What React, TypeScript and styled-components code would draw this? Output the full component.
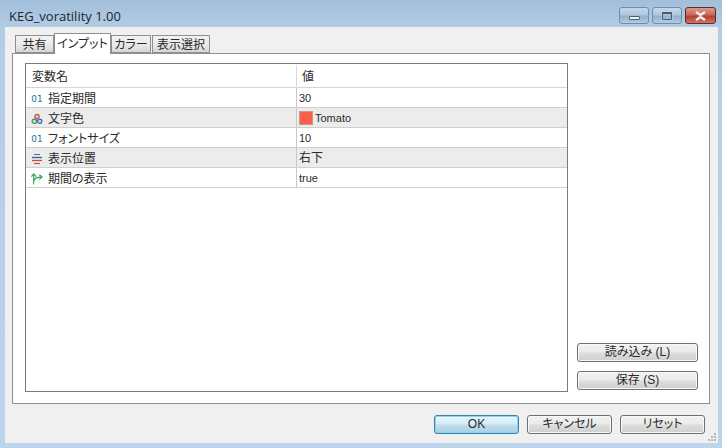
import * as React from "react"
import styled, { createGlobalStyle } from "styled-components"

const GlobalStyle = createGlobalStyle`
  html, body {
    margin: 0;
    padding: 0;
    background: #b9d1ea;
  }
  body {
    font-family: "Liberation Sans", "Noto Sans CJK JP", sans-serif;
    font-size: 12px;
    font-feature-settings: "palt";
    color: #2a2a2a;
  }
`

const Window = styled.div`
  width: 722px;
  height: 448px;
  box-sizing: border-box;
  display: flex;
  flex-direction: column;
  padding: 0 4px 5px 5px;
  background: linear-gradient(180deg, #a2bed9 0, #b4cde6 30px, #bcd4ec 100%);
  overflow: hidden;
`

const TitleBar = styled.div`
  height: 27px;
  flex: none;
  display: flex;
  justify-content: space-between;
  align-items: flex-start;
`

const Title = styled.div`
  font-family: "Open Sans", "Liberation Sans", sans-serif;
  font-size: 13px;
  line-height: 16px;
  padding: 8px 0 0 4px;
  color: #1c2630;
`

const Caption = styled.div`
  display: flex;
  gap: 3px;
  margin: 7px 2px 0 0;
`

const CaptionButton = styled.div<{ $close?: boolean; $w: number }>`
  width: ${({ $w }) => $w}px;
  height: 17px;
  box-sizing: border-box;
  display: flex;
  align-items: center;
  justify-content: center;
  border-radius: 3px;
  border: 1px solid ${({ $close }) => ($close ? "#5e2a2a" : "#6f8cab")};
  background: ${({ $close }) =>
    $close
      ? "linear-gradient(180deg, #dc9a8c 0, #c9695a 45%, #b5402f 55%, #cf7465 100%)"
      : "linear-gradient(180deg, #c5d8ea 0, #aec6de 45%, #93b0cd 55%, #b2cbe2 100%)"};
`

const MinimizeGlyph = styled.div`
  width: 11px;
  height: 4px;
  margin-top: 5px;
  box-sizing: border-box;
  background: #eef3f8;
  border: 1px solid #4d5f73;
  border-radius: 1px;
`

const MaximizeGlyph = styled.div`
  width: 10px;
  height: 8px;
  box-sizing: border-box;
  border: 1px solid #46586c;
  border-top-width: 2px;
  border-radius: 1px;
  box-shadow: 0 0 0 1px #d3e0ec55;
`

const Client = styled.div`
  position: relative;
  flex: 1;
  display: flex;
  flex-direction: column;
  box-sizing: border-box;
  padding: 6px 8px 0 7px;
  background: #f0f0f0;
`

const TabStrip = styled.div`
  display: flex;
  height: 20px;
  padding-left: 3px;
  align-items: flex-end;
  position: relative;
  z-index: 1;
`

const Tab = styled.div<{ $active?: boolean; $w: number; $gap: number }>`
  width: ${({ $w }) => $w}px;
  height: ${({ $active }) => ($active ? 21 : 18)}px;
  box-sizing: border-box;
  text-align: center;
  white-space: nowrap;
  line-height: ${({ $active }) => ($active ? 20 : 19)}px;
  margin-right: ${({ $gap }) => $gap}px;
  border: 1px solid #8e8f8f;
  border-bottom: ${({ $active }) => ($active ? "none" : "1px solid #8e8f8f")};
  background: ${({ $active }) =>
    $active ? "#ffffff" : "linear-gradient(180deg, #f2f2f2 0, #ebebeb 50%, #d6d6d6 100%)"};
  position: relative;
  z-index: ${({ $active }) => ($active ? 2 : 1)};
  margin-bottom: ${({ $active }) => ($active ? -1 : 0)}px;
`

const Panel = styled.div`
  height: 351px;
  box-sizing: border-box;
  border: 1px solid #8e8f8f;
  background: #ffffff;
  display: flex;
  padding: 9px 11px 11px 12px;
  gap: 9px;
`

const GridBox = styled.div`
  width: 543px;
  flex: none;
  box-sizing: border-box;
  border: 1px solid #7b7b7b;
  padding-top: 1px;
`

const HeaderRow = styled.div`
  display: grid;
  grid-template-columns: 270px 1fr;
  height: 23px;
  box-sizing: border-box;
  border-bottom: 1px solid #d5d5d5;
  line-height: 24px;
`

const HeaderCell = styled.div<{ $first?: boolean }>`
  padding-left: ${({ $first }) => ($first ? 6 : 5)}px;
  border-left: ${({ $first }) => ($first ? "none" : "1px solid #d9d9d9")};
`

const Row = styled.div<{ $shaded?: boolean }>`
  display: grid;
  grid-template-columns: 270px 1fr;
  height: 20px;
  box-sizing: border-box;
  border-bottom: 1px solid #cfcfcf;
  background: ${({ $shaded }) => ($shaded ? "#ececec" : "#ffffff")};
  line-height: 20px;
`

const NameCell = styled.div`
  display: flex;
  align-items: center;
  gap: 4px;
  padding: 2px 0 0 4px;
  box-sizing: border-box;
  height: 19px;
`

const IconSlot = styled.div`
  width: 14px;
  height: 14px;
  flex: none;
  display: flex;
  align-items: center;
  justify-content: center;
`

const NumberIcon = styled.span`
  font-family: "DejaVu Sans", sans-serif;
  font-size: 9px;
  color: #1f7390;
`

const ValueCell = styled.div`
  display: flex;
  align-items: center;
  gap: 2px;
  padding: 1px 0 0 2px;
  box-sizing: border-box;
  height: 19px;
  border-left: 1px solid #c8c8c8;
`

const ValueText = styled.span<{ $cjk?: boolean }>`
  font-size: ${({ $cjk }) => ($cjk ? 12 : 11)}px;
`

const Swatch = styled.div`
  width: 14px;
  height: 14px;
  box-sizing: border-box;
  background: #f9604a;
  border: 1px solid #c49a92;
`

const SideColumn = styled.div`
  flex: 1;
  display: flex;
  flex-direction: column;
  justify-content: flex-end;
  gap: 9px;
  padding-bottom: 2px;
`

const Button = styled.div<{ $primary?: boolean }>`
  height: 19px;
  box-sizing: border-box;
  text-align: center;
  line-height: 17px;
  border-radius: 3px;
  border: 1px solid ${({ $primary }) => ($primary ? "#3c7fb1" : "#707070")};
  background: ${({ $primary }) =>
    $primary
      ? "linear-gradient(180deg, #eaf6fb 0, #d9ecf5 45%, #bcdcec 55%, #a7d0e5 100%)"
      : "linear-gradient(180deg, #f2f2f2 0, #ebebeb 45%, #dddddd 55%, #cfcfcf 100%)"};
  box-shadow: inset 0 0 0 1px
    ${({ $primary }) => ($primary ? "#8fd3ec" : "#f8f8f8")};
`

const Footer = styled.div`
  display: flex;
  justify-content: flex-end;
  gap: 8px;
  padding: 11px 5px 0 0;
`

const FooterButton = styled(Button)`
  width: 85px;
`

const Grip = styled.svg`
  position: absolute;
  right: 1px;
  bottom: 1px;
`

const ColorIcon = () => (
  <svg width="12" height="12" viewBox="0 0 12 12" fill="none">
    <circle cx="6" cy="3.500" r="2.200" fill="#f0c4b8" stroke="#c0504d" strokeWidth="1.200" />
    <circle cx="3.300" cy="8.300" r="2.200" fill="#c8e4cf" stroke="#3f8f5a" strokeWidth="1.200" />
    <circle cx="8.700" cy="8.300" r="2.200" fill="#c4d4ec" stroke="#3c6db0" strokeWidth="1.200" />
  </svg>
)

const ListIcon = () => (
  <svg width="12" height="12" viewBox="0 0 12 12" fill="none">
    <path d="M3 1.500h6" stroke="#4a74b8" strokeWidth="1.100" />
    <path d="M1 4.500h10" stroke="#3d5f9f" strokeWidth="1.300" />
    <path d="M1 7.500h10" stroke="#c0504d" strokeWidth="1.300" />
    <path d="M3 10.500h6" stroke="#c0504d" strokeWidth="1.100" />
  </svg>
)

const BranchIcon = () => (
  <svg width="15" height="15" viewBox="0 0 15 15" fill="none" stroke="#2f9e58" strokeWidth="1.200">
    <path d="M4 14V3" />
    <path d="M1.500 5.500L4 2.500l2.500 3" />
    <path d="M4 10c1-3 4-4 8-4" />
    <path d="M10 3.500L13 6l-3 2.500" />
  </svg>
)

const rows = [
  { icon: <NumberIcon>01</NumberIcon>, name: "指定期間", value: "30" },
  { icon: <ColorIcon />, name: "文字色", value: "Tomato", swatch: true },
  { icon: <NumberIcon>01</NumberIcon>, name: "フォントサイズ", value: "10" },
  { icon: <ListIcon />, name: "表示位置", value: "右下", cjk: true },
  { icon: <BranchIcon />, name: "期間の表示", value: "true" },
]

export default function App() {
  return (
    <>
      <GlobalStyle />
      <Window>
        <TitleBar>
          <Title>KEG_voratility 1.00</Title>
          <Caption>
            <CaptionButton $w={30}>
              <MinimizeGlyph />
            </CaptionButton>
            <CaptionButton $w={30}>
              <MaximizeGlyph />
            </CaptionButton>
            <CaptionButton $w={31} $close>
              <svg width="13" height="10" viewBox="0 0 13 10">
                <path
                  d="M2 1l4.500 3L11 1M2 9l4.500-3L11 9"
                  fill="none"
                  stroke="#f4ecea"
                  strokeWidth="2.400"
                />
              </svg>
            </CaptionButton>
          </Caption>
        </TitleBar>
        <Client>
          <TabStrip>
            <Tab $w={39} $gap={0}>
              共有
            </Tab>
            <Tab $w={57} $gap={0} $active>
              インプット
            </Tab>
            <Tab $w={40} $gap={1}>
              カラー
            </Tab>
            <Tab $w={58} $gap={0}>
              表示選択
            </Tab>
          </TabStrip>
          <Panel>
            <GridBox>
              <HeaderRow>
                <HeaderCell $first>変数名</HeaderCell>
                <HeaderCell>値</HeaderCell>
              </HeaderRow>
              {rows.map((row, i) => (
                <Row key={row.name} $shaded={i % 2 === 1}>
                  <NameCell>
                    <IconSlot>{row.icon}</IconSlot>
                    {row.name}
                  </NameCell>
                  <ValueCell>
                    {row.swatch && <Swatch />}
                    <ValueText $cjk={row.cjk}>{row.value}</ValueText>
                  </ValueCell>
                </Row>
              ))}
            </GridBox>
            <SideColumn>
              <Button>読み込み (L)</Button>
              <Button>保存 (S)</Button>
            </SideColumn>
          </Panel>
          <Footer>
            <FooterButton $primary>OK</FooterButton>
            <FooterButton>キャンセル</FooterButton>
            <FooterButton>リセット</FooterButton>
          </Footer>
          <Grip width="10" height="10" viewBox="0 0 10 10" fill="#b5b5b5">
            <rect x="7" y="1" width="2" height="2" />
            <rect x="4" y="4" width="2" height="2" />
            <rect x="7" y="4" width="2" height="2" />
            <rect x="1" y="7" width="2" height="2" />
            <rect x="4" y="7" width="2" height="2" />
            <rect x="7" y="7" width="2" height="2" />
          </Grip>
        </Client>
      </Window>
    </>
  )
}
